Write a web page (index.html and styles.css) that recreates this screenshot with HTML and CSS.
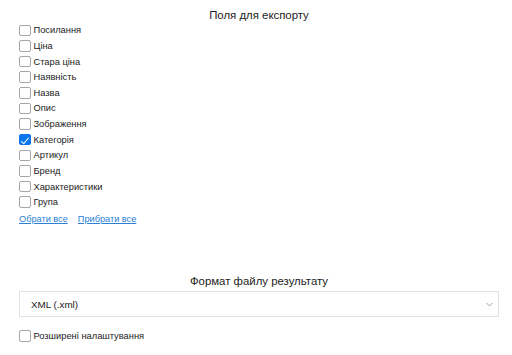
FILE: index.html
```html
<!DOCTYPE html>
<html lang="uk">
<head>
  <meta charset="UTF-8" />
  <meta name="viewport" content="width=device-width, initial-scale=1.0" />
  <title>Експорт</title>
  <link rel="stylesheet" href="styles.css">
</head>
<body>
  <div class="export-form">
    <h2 class="section-title">Поля для експорту</h2>

    <div class="field-list">
      <label class="field"><input type="checkbox" /> Посилання</label>
      <label class="field"><input type="checkbox" /> Ціна</label>
      <label class="field"><input type="checkbox" /> Стара ціна</label>
      <label class="field"><input type="checkbox" /> Наявність</label>
      <label class="field"><input type="checkbox" /> Назва</label>
      <label class="field"><input type="checkbox" /> Опис</label>
      <label class="field"><input type="checkbox" /> Зображення</label>
      <label class="field"><input type="checkbox" checked /> Категорія</label>
      <label class="field"><input type="checkbox" /> Артикул</label>
      <label class="field"><input type="checkbox" /> Бренд</label>
      <label class="field"><input type="checkbox" /> Характеристики</label>
      <label class="field"><input type="checkbox" /> Група</label>
    </div>

    <div class="select-links">
      <a href="#" onclick="toggleAll(true); return false;">Обрати все</a>
      <a href="#" onclick="toggleAll(false); return false;">Прибрати все</a>
    </div>

    <h2 class="section-title format-title">Формат файлу результату</h2>

    <div class="select-wrap">
      <select class="format-select">
        <option>XML (.xml)</option>
        <option>CSV (.csv)</option>
        <option>Excel (.xlsx)</option>
      </select>
      <svg class="chevron" width="7" height="5" viewBox="0 0 7 5">
        <path d="M0.5 1 L3.5 4 L6.5 1" fill="none" stroke="#a0a0a0" stroke-width="1" />
      </svg>
    </div>

    <label class="field advanced"><input type="checkbox" /> Розширені налаштування</label>
  </div>

  <script>
    function toggleAll(state) {
      document.querySelectorAll('.field-list input').forEach(box => {
        box.checked = state;
      });
    }
  </script>
</body>
</html>
```

FILE: styles.css
```css
* {
  box-sizing: border-box;
}

body {
  font-family: "Liberation Sans", Arial, sans-serif;
  margin: 0;
  background: #fff;
  color: #222;
}

.export-form {
  padding: 0 13px 0 19px;
}

.section-title {
  font-size: 11.4px;
  font-weight: normal;
  line-height: 15px;
  text-align: center;
  margin: 7.5px 0 0;
  color: #222;
}

.field-list {
  display: flex;
  flex-direction: column;
}

.field {
  display: flex;
  align-items: center;
  height: 15.64px;
  font-size: 9.3px;
  color: #222;
}

.field input {
  appearance: none;
  position: relative;
  width: 11.5px;
  height: 11.5px;
  margin: 0 3px 0 0;
  border: 1px solid #a6a6a6;
  border-radius: 2px;
  background: #fff;
}

.field input:checked {
  background: #0b75f0;
  border-color: #0b75f0;
}

/* check mark */
.field input:checked::after {
  content: "";
  position: absolute;
  left: 3.2px;
  top: 0.6px;
  width: 3px;
  height: 6.5px;
  border: solid #fff;
  border-width: 0 1.8px 1.8px 0;
  transform: rotate(40deg);
}

.select-links {
  display: flex;
  gap: 10px;
  margin-top: 2px;
  line-height: 15px;
  font-size: 9.2px;
}

.select-links a {
  color: #2b80d5;
}

.format-title {
  margin-top: 46.7px;
}

.select-wrap {
  position: relative;
  margin-top: 2.8px;
}

.format-select {
  appearance: none;
  width: 100%;
  height: 26px;
  border: 1px solid #e2e2e2;
  border-radius: 0;
  background: #fff;
  padding: 0 11px;
  font-family: inherit;
  font-size: 9.8px;
  color: #222;
}

.chevron {
  position: absolute;
  right: 6px;
  top: 11px;
}

.advanced {
  margin-top: 10.7px;
}
```
